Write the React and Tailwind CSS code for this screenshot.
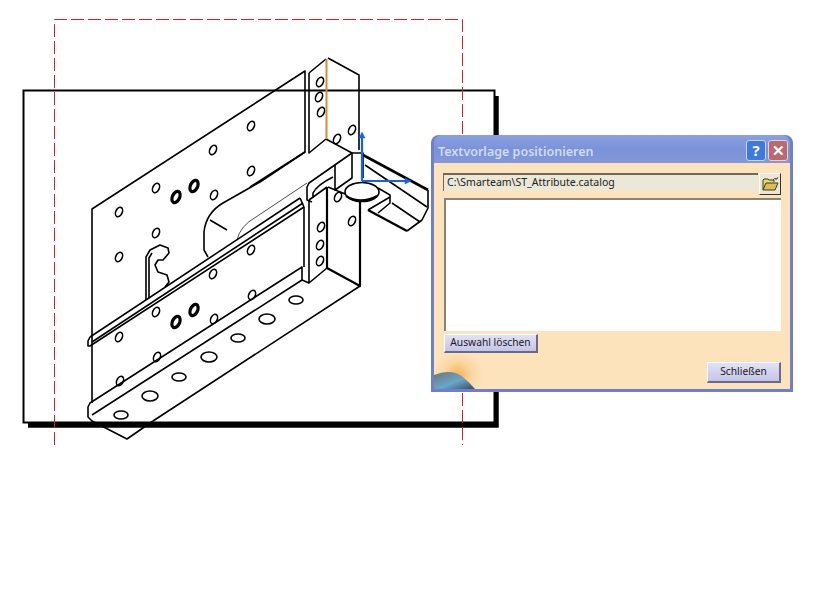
import { useId } from "react";

// hole positions read off the drawing: [x, y]
const slantHoles = [
  [119, 212], [156, 188], [213, 150], [251, 126], [156, 233], [214, 195], [251, 171],
  [119, 257], [119, 337], [156, 312], [213, 274], [251, 250], [214, 319], [252, 295],
  [157, 357], [120, 381], [320, 82], [319, 97], [321, 112], [337, 139], [352, 130],
  [338, 197], [352, 221], [321, 227], [320, 245], [320, 261],
];
const doubleHoles = [[176, 197], [194, 186], [176, 322], [194, 310]];
const flatHoles = [
  [121, 415, 7, 4], [150, 396, 8, 5], [179, 377, 7, 4], [209, 357, 8, 5],
  [238, 338, 7, 4], [267, 319, 8, 5], [296, 300, 7, 4],
];

const lines = [
  // back plate
  "M92 403V209L305 71V152L260 182L223 203Q206 213 204 232V250L208 257",
  "M309 73V153L326 139",
  "M309 73L326 59",
  "M305 152L250 187",
  // tall flange
  "M328 58L359 75V150",
  "M326 139L352 153L309 183L307 187V200L312 202",
  "M352 153V178L335 190V165",
  "M352 153H363V178",
  // rounded pocket
  "M313 198V193Q317 185 333 177",
  "M227 230L210 220",
  // lug on the right
  "M365 165L427 207",
  "M428 190V208L422 220L407 231",
  "M378 188L390 195V203L378 213",
  "M390 197L368 210",
  "M392 203L420 222",
  // column
  "M309 200V283L327 268",
  "M309 200L327 187",
  "M304 207V267",
  "M300 198L304 207",
  "M328 187L360 200",
  // bottom flange
  "M302 280V267L90 403L88 407V417L92 421L127 439L153 421",
  "M302 280L92 415",
  "M302 280L309 283",
  "M360 286L153 421",
  // middle rail
  "M90 337L300 198",
  "M92 342L303 203",
  "M90 337L88 341V346H90L304 207",
  // notch
  "M146 300V257L150 250L160 245L168 248L169 253L163 260L158 260L155 265L158 272L167 275L169 282L165 287",
  "M149 298V258L152 253",
];

function PartDrawing() {
  return (
    <svg className="absolute left-0 top-0" width="820" height="600" viewBox="0 0 820 600">
      {/* sheet frame and its shadow */}
      <path d="M496 96V425H28" fill="none" stroke="#000" strokeWidth="5.5" />
      <rect x="23.5" y="90.5" width="471" height="332" fill="#fff" stroke="#000" strokeWidth="2" />
      {/* view limits */}
      <path d="M54.5 445V19.5H462.5V445" fill="none" stroke="#d8202c" strokeWidth="1" strokeDasharray="13 4" />

      <g fill="none" stroke="#000" strokeWidth="1.6" strokeLinejoin="round">
        {lines.map((d) => (
          <path key={d} d={d} />
        ))}
        <path d="M237 240Q240 226 256 217L307 183" strokeWidth="0.7" />
        <path d="M363 155L428 190" strokeWidth="2.6" />
        <path d="M327 187V268L360 286V200" strokeWidth="2.2" />
        <path d="M368 210L407 231" strokeWidth="2.4" />
        {slantHoles.map(([x, y]) => (
          <ellipse key={`${x}-${y}`} cx={x} cy={y} rx="3.2" ry="5" transform={`rotate(25 ${x} ${y})`} />
        ))}
        {doubleHoles.map(([x, y]) => (
          <ellipse key={`${x}-${y}`} cx={x} cy={y} rx="3.6" ry="6" strokeWidth="3.2" transform={`rotate(25 ${x} ${y})`} />
        ))}
        {flatHoles.map(([x, y, rx, ry]) => (
          <ellipse key={`${x}-${y}`} cx={x} cy={y} rx={rx} ry={ry} />
        ))}
        <ellipse cx="362" cy="192" rx="17" ry="9.5" fill="#fff" />
        <path d="M346 196Q360 205 377 196" strokeWidth="2.4" />
      </g>

      <path d="M326.5 59V139" stroke="#d98a3a" strokeWidth="2" />

      {/* compass axes */}
      <g stroke="#1662ea" strokeWidth="2.2" fill="#1662ea">
        <path d="M362 181V137M362 181H406" fill="none" />
        <path d="M362 132L359 138H365Z" strokeWidth="0.5" />
        <path d="M411 181L405 178V184Z" strokeWidth="0.5" />
      </g>
    </svg>
  );
}

function FolderIcon() {
  return (
    <svg width="17" height="14" viewBox="0 0 17 14">
      <path d="M1 13V3L2 2H6L7 3H12V5" fill="#e8d870" stroke="#3a3a20" strokeWidth="1" />
      <path d="M1 13L4 6H16L13 13Z" fill="#d8c050" stroke="#3a3a20" strokeWidth="1" />
      <path d="M11 3Q13 0 15 2M15 2L16 0M15 2L13 2" fill="none" stroke="#3a3a20" strokeWidth="0.8" />
    </svg>
  );
}

function Globe() {
  const id = useId();
  return (
    <svg className="absolute bottom-0 left-0" width="50" height="34" viewBox="0 0 50 34">
      <defs>
        <radialGradient id={`${id}g`} cx="24" cy="20" r="25" gradientUnits="userSpaceOnUse">
          <stop offset="0" stopColor="#f6b452" />
          <stop offset="0.55" stopColor="#fad6a2" />
          <stop offset="1" stopColor="#fde3bb" />
        </radialGradient>
        <linearGradient id={`${id}s`} x1="0" y1="0" x2="1" y2="1">
          <stop offset="0" stopColor="#6c7478" />
          <stop offset="0.55" stopColor="#6aa6cc" />
          <stop offset="1" stopColor="#3a4a5c" />
        </linearGradient>
      </defs>
      <rect width="50" height="34" fill={`url(#${id}g)`} />
      <path d="M0 20Q18 13 30 23Q36 28 41 34H0Z" fill={`url(#${id}s)`} />
    </svg>
  );
}

function DialogButton({ className, children }) {
  return (
    <button
      className={`flex items-center justify-center bg-gradient-to-b from-[#e2e2f6] to-[#c4c4e8] border-t border-l border-t-white border-l-white border-r-2 border-b-2 border-r-[#6a6a88] border-b-[#6a6a88] text-[10.25px] text-[#1a1a1a] ${className}`}
    >
      {children}
    </button>
  );
}

export default function App() {
  return (
    <div className="relative w-[820px] h-[600px] bg-white overflow-hidden font-['Noto_Sans','Liberation_Sans',sans-serif]">
      <PartDrawing />

      {/* catalog dialog */}
      <div className="absolute left-[431px] top-[135px] w-[362px] h-[257px] flex flex-col rounded-t-[8px] bg-[#6f7fca] px-[3px] pb-[3px]">
        <div className="flex h-[28px] shrink-0 items-center justify-between rounded-t-[8px] bg-gradient-to-b from-[#8aa2e2] via-[#7a92d8] to-[#8298da] pl-[4px] pr-[2px]">
          <span className="pt-[6px] text-[12.5px] font-semibold text-[#d0dbf4]">Textvorlage positionieren</span>
          <div className="flex gap-[2px] pt-[3px]">
            <div className="flex h-[21px] w-[20px] items-center justify-center rounded-[3px] border border-[#c8d8f4] bg-[#3f78e0] text-[15px] font-bold text-white">?</div>
            <div className="flex h-[21px] w-[20px] items-center justify-center rounded-[3px] border border-[#e8d0d0] bg-[#b86a70] text-[15px] font-bold text-white">✕</div>
          </div>
        </div>

        <div className="relative flex flex-1 flex-col bg-[#fde3bb] pl-[9px] pr-[9px] pt-[10px]">
          <div className="flex h-[22px] items-start">
            <div className="flex h-[18px] w-[315px] items-center border-t-2 border-l border-t-[#6e685c] border-l-[#6e685c] bg-[#ebe8d8] pl-[3px] text-[10.5px] text-[#222]">
              C:\Smarteam\ST_Attribute.catalog
            </div>
            <div className="ml-[1px] flex h-[22px] w-[22px] items-center justify-center border-r border-b border-r-[#333] border-b-[#333] border-t border-l border-t-white border-l-white bg-[#ebe6d6]">
              <FolderIcon />
            </div>
          </div>
          <div className="mt-[3px] ml-[1px] h-[133px] w-[337px] border-t-2 border-l-2 border-t-[#8a8478] border-l-[#8a8478] bg-white" />
          <DialogButton className="ml-[1px] mt-[3px] h-[19px] w-[94px]">Auswahl löschen</DialogButton>
          <div className="mt-[9px] flex justify-end">
            <DialogButton className="h-[21px] w-[74px]">Schließen</DialogButton>
          </div>
          <Globe />
        </div>
      </div>
    </div>
  );
}
